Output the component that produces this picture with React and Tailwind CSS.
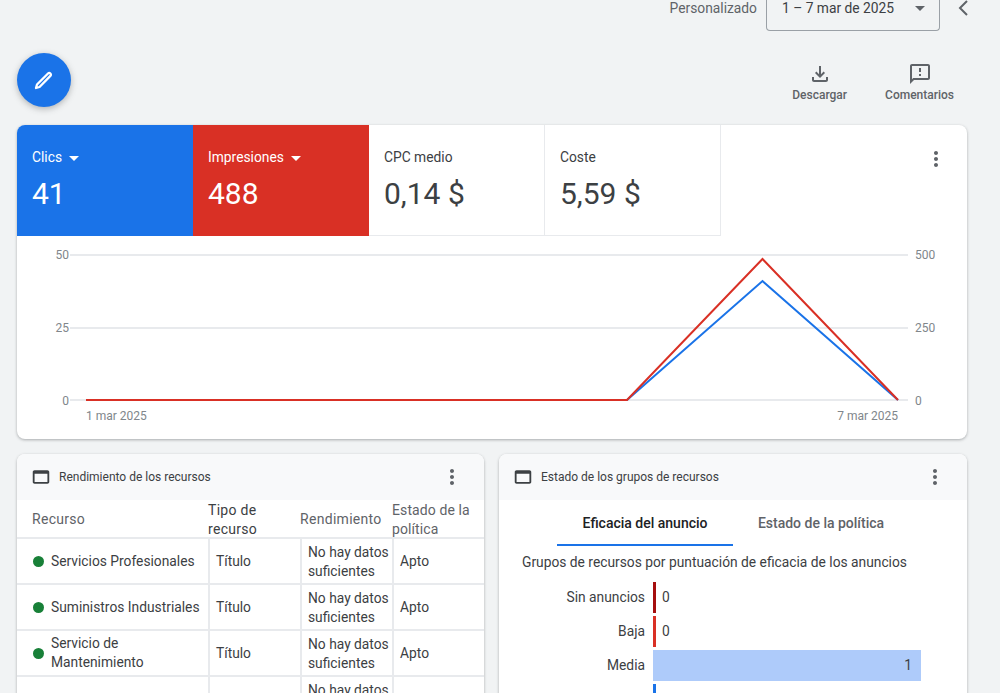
const font = { fontFamily: 'Roboto, sans-serif' };

const Icon = ({ d, className }) => (
  <svg viewBox="0 0 24 24" preserveAspectRatio="none" className={className} fill="currentColor">
    <path d={d} />
  </svg>
);

const paths = {
  download: 'M18 15v3H6v-3H4v3c0 1.1.9 2 2 2h12c1.1 0 2-.9 2-2v-3h-2zm-1-4l-1.41-1.41L13 12.17V4h-2v8.17L8.41 9.59 7 11l5 5 5-5z',
  feedback: 'M20 2H4c-1.1 0-2 .9-2 2v18l4-4h14c1.1 0 2-.9 2-2V4c0-1.1-.9-2-2-2zm0 14H5.17L4 17.17V4h16v12zM11 12h2v2h-2zm0-6h2v4h-2z',
  web: 'M19 4H5c-1.11 0-2 .9-2 2v12c0 1.1.89 2 2 2h14c1.1 0 2-.9 2-2V6c0-1.1-.89-2-2-2zm0 14H5V8h14v10z',
  more: 'M12 8c1.1 0 2-.9 2-2s-.9-2-2-2-2 .9-2 2 .9 2 2 2zm0 2c-1.1 0-2 .9-2 2s.9 2 2 2 2-.9 2-2-.9-2-2-2zm0 6c-1.1 0-2 .9-2 2s.9 2 2 2 2-.9 2-2-.9-2-2-2z',
};

const Caret = ({ className }) => (
  <span className={`inline-block w-0 h-0 border-x-[5px] border-x-transparent border-t-[5px] ${className}`} />
);

const Metric = ({ label, value, caret, className }) => (
  <div className={`w-[176px] h-[111px] pl-[15px] pt-[24px] ${className}`}>
    <div className="flex items-center gap-[7px] h-[16px] text-[13.8px] leading-[16px]">
      {label}
      {caret && <Caret className="border-t-white mt-[2px]" />}
    </div>
    <div className="mt-[11px] text-[30px] leading-[36px]">{value}</div>
  </div>
);

const Chart = () => (
  <svg viewBox="0 0 950 202" className="block w-[950px] h-[202px]" style={{ ...font }}>
    <g stroke="#e8eaed" strokeWidth="2">
      <line x1="53" x2="891" y1="19" y2="19" />
      <line x1="53" x2="891" y1="92" y2="92" />
      <line x1="53" x2="891" y1="164" y2="164" />
    </g>
    <g fill="#80868b" fontSize="12">
      <text x="52" y="23" textAnchor="end">50</text>
      <text x="52" y="96" textAnchor="end">25</text>
      <text x="52" y="169" textAnchor="end">0</text>
      <text x="898" y="23">500</text>
      <text x="898" y="96">250</text>
      <text x="898" y="169">0</text>
      <text x="69" y="184">1 mar 2025</text>
      <text x="881" y="184" textAnchor="end">7 mar 2025</text>
    </g>
    <polyline points="69,164 610,164 745.5,45 881,164" fill="none" stroke="#1a73e8" strokeWidth="2" />
    <polyline points="69,164 610,164 745.5,23 881,164" fill="none" stroke="#d93025" strokeWidth="2" />
  </svg>
);

const CardHeader = ({ title }) => (
  <div className="flex items-center h-[46px] bg-[#f8f9fa] pl-[13px] pr-[20px] shrink-0">
    <Icon d={paths.web} className="w-[22px] h-[20px] text-[#3c4043]" />
    <span className="ml-[7px] text-[12px] text-[#3c4043]">{title}</span>
    <Icon d={paths.more} className="w-[24px] h-[24px] ml-auto text-[#5f6368]" />
  </div>
);

const rows = [
  { name: 'Servicios Profesionales' },
  { name: 'Suministros Industriales' },
  { name: 'Servicio de Mantenimiento' },
];

const cell = 'flex items-center border-l-2 border-[#e8eaed] pl-[6px] leading-[19px]';
const cols = 'grid grid-cols-[191px_92px_92px_92px]';

const Row = ({ name }) => (
  <div className={`${cols} h-[46px] border-b-2 border-[#e8eaed] text-[13.8px] text-[#3c4043]`}>
    <div className="flex items-center pl-[16px] leading-[19px]">
      {name ? (
        <>
          <span className="w-[11px] h-[11px] rounded-full bg-[#188038] shrink-0" />
          <span className="ml-[7px]">{name}</span>
        </>
      ) : null}
    </div>
    <div className={cell}>{name ? 'Título' : ''}</div>
    <div className={`${cell} pt-[1px]`}>No hay datos suficientes</div>
    <div className={cell}>{name ? 'Apto' : ''}</div>
  </div>
);

const Bar = ({ label, value, color, wide }) => (
  <div className="flex items-center h-[31px] text-[13.8px] text-[#3c4043]">
    <div className="w-[137px] pr-[8px] text-right">{label}</div>
    {wide ? (
      <div className={`w-[268px] h-full pr-[9px] flex items-center justify-end ${color}`}>{value}</div>
    ) : (
      <>
        <div className={`w-[3px] h-full ${color}`} />
        <div className="ml-[6px]">{value}</div>
      </>
    )}
  </div>
);

export default function App() {
  return (
    <div className="w-[1000px] h-[693px] overflow-hidden bg-[#f1f3f4]" style={font}>
      <div className="flex justify-end h-[31px]">
        <div className="flex items-center h-[16px] text-[13.8px] text-[#5f6368]">Personalizado</div>
        <div className="ml-[9px] w-[174px] h-[31px] border-x border-b border-[#9aa0a6] rounded-b-[4px] flex items-start pl-[15px] text-[13.8px] leading-[16px] text-[#3c4043]">
          1 – 7 mar de 2025
          <Caret className="border-t-[#5f6368] ml-[21px] mt-[6px]" />
        </div>
        <div className="w-[60px] pl-[17px]">
          <svg viewBox="0 0 12 16" className="w-[12px] h-[16px] text-[#5f6368]" fill="none" stroke="currentColor" strokeWidth="2">
            <path d="M10 1 L3 8 L10 15" />
          </svg>
        </div>
      </div>

      <div className="flex items-start justify-between h-[94px] pt-[22px] pl-[17px] pr-[46px]">
        <div className="w-[54px] h-[54px] rounded-full bg-[#1a73e8] flex items-center justify-center shadow-[0_2px_6px_rgba(60,64,67,0.35)]">
          <svg viewBox="0 0 24 24" className="w-[24px] h-[24px]" fill="none" stroke="white" strokeWidth="2.3" strokeLinejoin="round">
            <path d="M4 20 L5 16.5 L16 5.5 C16.7 4.8 17.7 4.8 18.4 5.5 C19.1 6.2 19.1 7.2 18.4 7.9 L7.5 19 Z" />
          </svg>
        </div>
        <div className="flex text-[12px] font-medium text-[#5f6368] pt-[9px]">
          <div className="flex flex-col items-center">
            <Icon d={paths.download} className="w-[24px] h-[24px]" />
            <span>Descargar</span>
          </div>
          <div className="flex flex-col items-center ml-[38px]">
            <Icon d={paths.feedback} className="w-[24px] h-[24px]" />
            <span>Comentarios</span>
          </div>
        </div>
      </div>

      <div className="mx-[17px] w-[950px] h-[314px] bg-white rounded-[8px] overflow-hidden shadow-[0_1px_3px_rgba(60,64,67,0.4)]">
        <div className="flex h-[111px] relative">
          <Metric label="Clics" value="41" caret className="bg-[#1a73e8] text-white" />
          <Metric label="Impresiones" value="488" caret className="bg-[#d93025] text-white" />
          <Metric label="CPC medio" value="0,14 $" className="text-[#3c4043] border-r border-b border-[#e8eaed]" />
          <Metric label="Coste" value="5,59 $" className="text-[#3c4043] border-r border-b border-[#e8eaed]" />
          <Icon d={paths.more} className="absolute top-[22px] right-[19px] w-[24px] h-[24px] text-[#5f6368]" />
        </div>
        <Chart />
      </div>

      <div className="flex gap-[15px] mx-[17px] mt-[15px]">
        <div className="w-[467px] h-[260px] bg-white rounded-t-[8px] overflow-hidden shadow-[0_1px_3px_rgba(60,64,67,0.4)]">
          <CardHeader title="Rendimiento de los recursos" />
          <div className={`${cols} h-[39px] border-b-2 border-[#e8eaed] text-[14px] leading-[19px] text-[#5f6368] tracking-[0.3px]`}>
            <div className="flex items-center pl-[15px]">Recurso</div>
            <div className="flex items-center pt-[1px] text-[#3c4043]">Tipo de recurso</div>
            <div className="flex items-center">Rendimiento</div>
            <div className="flex items-center pt-[1px] tracking-[0.1px]">Estado de la política</div>
          </div>
          {rows.map((r) => (
            <Row key={r.name} name={r.name} />
          ))}
          <Row />
        </div>

        <div className="w-[468px] h-[260px] bg-white rounded-t-[8px] overflow-hidden shadow-[0_1px_3px_rgba(60,64,67,0.4)]">
          <CardHeader title="Estado de los grupos de recursos" />
          <div className="flex pl-[58px] h-[46px] text-[14px] font-medium">
            <div className="w-[176px] pt-[2px] flex items-center justify-center text-[#202124] border-b-2 border-[#1a73e8]">Eficacia del anuncio</div>
            <div className="w-[176px] pt-[2px] flex items-center justify-center text-[#5f6368] border-b-2 border-transparent">Estado de la política</div>
          </div>
          <div className="pl-[23px] pt-[8px] h-[36px] text-[13.8px] leading-[16px] text-[#3c4043]">
            Grupos de recursos por puntuación de eficacia de los anuncios
          </div>
          <div className="flex flex-col gap-[3px] pl-[17px]">
            <Bar label="Sin anuncios" value="0" color="bg-[#a50e0e]" />
            <Bar label="Baja" value="0" color="bg-[#d93025]" />
            <Bar label="Media" value="1" color="bg-[#aecbfa]" wide />
            <Bar label="" value="" color="bg-[#1a73e8]" />
          </div>
        </div>
      </div>
    </div>
  );
}
